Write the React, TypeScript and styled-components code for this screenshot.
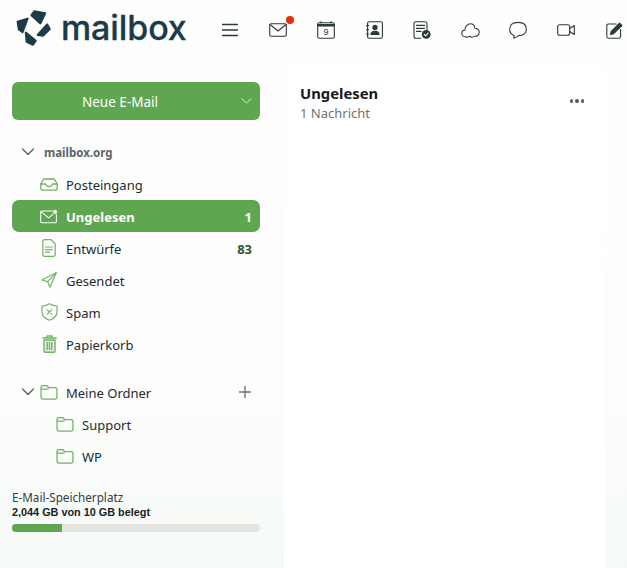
import React, { FC, ReactNode } from 'react';
import styled, { createGlobalStyle } from 'styled-components';

const GlobalStyle = createGlobalStyle`
  html, body {
    margin: 0;
    height: 100%;
    overflow: hidden;
  }
  body {
    font-family: "Noto Sans", "Open Sans", sans-serif;
    color: #1f2a2e;
  }
`;

const Page = styled.div`
  width: 627px;
  height: 568px;
  display: flex;
  flex-direction: column;
  overflow: hidden;
  background: linear-gradient(180deg, #fdfefd 0%, #fcfdfc 70%, #f5faf7 100%);
`;

const Header = styled.header`
  height: 60px;
  flex: none;
  display: flex;
  align-items: center;
  white-space: nowrap;
`;

const Logo = styled.div`
  width: 206px;
  flex: none;
  display: flex;
  align-items: center;
  gap: 9px;
  padding: 0 0 4px 16px;
  box-sizing: border-box;
`;

const LogoText = styled.span`
  font-family: "Inter", sans-serif;
  font-size: 34px;
  font-weight: 500;
  letter-spacing: -0.1px;
  color: #1b3b48;
  line-height: 38px;
  -webkit-text-stroke: 0.3px #1b3b48;
`;

const Toolbar = styled.nav`
  display: flex;
  align-items: center;
`;

const ToolButton = styled.div`
  position: relative;
  width: 48px;
  height: 48px;
  flex: none;
  display: flex;
  align-items: center;
  justify-content: center;
`;

const Badge = styled.span`
  position: absolute;
  top: 10px;
  right: 8px;
  width: 8px;
  height: 8px;
  border-radius: 50%;
  background: #e2300e;
`;

const Body = styled.div`
  flex: 1;
  display: flex;
  min-height: 0;
`;

const Sidebar = styled.aside`
  width: 284px;
  flex: none;
  box-sizing: border-box;
  padding: 22px 24px 0 12px;
  display: flex;
  flex-direction: column;
`;

const NewMail = styled.div`
  position: relative;
  height: 38px;
  box-sizing: border-box;
  padding: 2px 32px 0 0;
  border-radius: 6px;
  background: #5fa651;
  color: #fff;
  font-size: 13.5px;
  display: flex;
  align-items: center;
  justify-content: center;
`;

const NewMailCaret = styled.span`
  position: absolute;
  right: 7px;
  top: 12px;
  display: flex;
`;

const AccountRow = styled.div`
  height: 32px;
  margin-top: 16px;
  display: flex;
  align-items: center;
  padding-left: 8px;
  gap: 8px;
  font-size: 11.5px;
  font-weight: 700;
  color: #5b6468;
`;

const Row = styled.div<{ $active?: boolean; $indent?: number }>`
  height: 32px;
  display: flex;
  align-items: center;
  box-sizing: border-box;
  padding-left: ${p => p.$indent ?? 28}px;
  padding-right: 8px;
  border-radius: 7px;
  font-size: 13px;
  font-weight: ${p => (p.$active ? 700 : 400)};
  background: ${p => (p.$active ? '#5fa651' : 'transparent')};
  color: ${p => (p.$active ? '#fff' : '#222b30')};
`;

const RowIcon = styled.span`
  width: 18px;
  height: 20px;
  flex: none;
  margin-right: 8px;
  display: flex;
  align-items: center;
  justify-content: center;
`;

const RowLabel = styled.span`
  flex: 1;
  padding-top: 2px;
`;

const Count = styled.span<{ $active?: boolean }>`
  font-size: 13px;
  font-weight: 700;
  padding-top: 2px;
  color: ${p => (p.$active ? '#fff' : '#2f5a2a')};
`;

const FolderGroup = styled.div`
  margin-top: 16px;
`;

const FolderCaret = styled.span`
  width: 20px;
  margin-left: -20px;
  display: flex;
`;

const Storage = styled.div`
  margin-top: 17px;
`;

const StorageLabel = styled.div`
  font-size: 11.7px;
  line-height: 16px;
  color: #333b3f;
`;

const StorageValue = styled.div`
  font-family: "Liberation Sans", Arial, sans-serif;
  font-size: 10.85px;
  line-height: 15px;
  font-weight: 700;
  color: #1c2124;
`;

const StorageBar = styled.div`
  height: 8px;
  margin-top: 4px;
  border-radius: 4px;
  background: #e6e4df;
  overflow: hidden;
`;

const StorageFill = styled.div`
  height: 100%;
  background: #5fa651;
`;

const Main = styled.main`
  width: 321px;
  flex: none;
  margin-top: 6px;
  background: #fff;
  box-sizing: border-box;
  padding: 17px 16px;
  display: flex;
  align-items: flex-start;
  justify-content: space-between;
`;

const Title = styled.div`
  font-size: 14.8px;
  line-height: 20px;
  font-weight: 700;
  color: #17191b;
`;

const Subtitle = styled.div`
  font-size: 13px;
  line-height: 20px;
  color: #6e7478;
`;

const MoreButton = styled.div`
  display: flex;
  gap: 2px;
  margin: 16px 5px 0 0;
`;

const Dot = styled.span`
  width: 3.5px;
  height: 3.5px;
  border-radius: 50%;
  background: #5a5f62;
`;

const Icon: FC<{ size?: number; w?: number; h?: number; color?: string; sw?: number; children: ReactNode }> = ({
  size = 20,
  w,
  h,
  color = '#2d3a36',
  sw = 1.3,
  children,
}) => (
  <svg
    width={w ?? size}
    height={h ?? size}
    viewBox={`0 0 ${w ?? size} ${h ?? size}`}
    fill="none"
    stroke={color}
    strokeWidth={sw}
    strokeLinecap="round"
    strokeLinejoin="round"
  >
    {children}
  </svg>
);

const LogoMark = () => (
  <svg width="36" height="38" viewBox="0 0 36 38" fill="#1b3b48" stroke="#1b3b48" strokeWidth="2" strokeLinejoin="round">
    <path d="M18.4 2.2 L29.2 4.2 L24.4 14.4 L15.4 6.2 Z" />
    <path d="M1.6 12.6 L11.6 9.6 L6.6 23.2 L2.8 20.4 Z" />
    <path d="M31.2 15.4 L33.8 20 L27 26.8 L21.6 26 Z" />
    <path d="M9.8 23.6 L19.8 31.8 L17 35.8 L10.6 32.8 Z" />
  </svg>
);

const green = '#72b166';

const Chevron = () => (
  <Icon size={16} color="#4b5356" sw={1.1}>
    <path d="M2.5 5 L8 10.5 L13.5 5" />
  </Icon>
);

const FolderIcon = () => (
  <Icon w={18} h={16} color={green} sw={1.25}>
    <path d="M1 4 V13 Q1 15 3 15 H15 Q17 15 17 13 V5.5 Q17 3.5 15 3.5 H8.5 L6.8 1.5 H2.8 Q1 1.5 1 4 Z" />
    <path d="M1 5 H8" />
  </Icon>
);

const App: FC = () => (
  <>
    <GlobalStyle />
    <Page>
      <Header>
        <Logo>
          <LogoMark />
          <LogoText>mailbox</LogoText>
        </Logo>
        <Toolbar>
          <ToolButton>
            <Icon w={16} h={14} sw={1.4}>
              <path d="M0.5 1.5 H15.5 M0.5 7 H15.5 M0.5 12.5 H15.5" />
            </Icon>
          </ToolButton>
          <ToolButton>
            <Icon w={18} h={14} sw={1.1}>
              <rect x="0.7" y="0.7" width="16.6" height="12.6" rx="1.5" />
              <path d="M1 1.5 L9 8 L17 1.5" />
            </Icon>
            <Badge />
          </ToolButton>
          <ToolButton>
            <Icon w={18} h={18} sw={1.1}>
              <rect x="0.7" y="1.8" width="16.6" height="15.5" rx="1.5" />
              <path d="M0.7 4.2 H17.3" strokeWidth={2.4} />
              <path d="M4 0.6 V2 M14 0.6 V2" />
              <text x="9" y="14" textAnchor="middle" fontSize="9" fontFamily="Liberation Sans" fill="#2d3a36" stroke="none">
                9
              </text>
            </Icon>
          </ToolButton>
          <ToolButton>
            <Icon w={17} h={18} sw={1.1}>
              <rect x="1.6" y="0.7" width="14.8" height="16.6" rx="1.5" />
              <path d="M0.4 4.5 H2.6 M0.4 8.8 H2.6 M0.4 13 H2.6" />
              <circle cx="9" cy="6.4" r="2.6" fill="#2d3a36" stroke="none" />
              <path d="M4.4 14 Q4.4 9.8 9 9.8 Q13.6 9.8 13.6 14 Z" fill="#2d3a36" stroke="none" />
            </Icon>
          </ToolButton>
          <ToolButton>
            <Icon w={18} h={18} sw={1.1}>
              <path d="M8 17.3 H3 Q1 17.3 1 15.3 V2.7 Q1 0.7 3 0.7 H12 Q14 0.7 14 2.7 V9" />
              <path d="M3.5 4.4 H11.5 M3.5 7.4 H11.5 M3.5 10.4 H8" />
              <circle cx="13.2" cy="13.4" r="4.4" fill="#2d3a36" stroke="none" />
              <path d="M11.2 13.4 L12.7 14.9 L15.2 12" stroke="#fff" />
            </Icon>
          </ToolButton>
          <ToolButton>
            <Icon w={19} h={15} sw={1.05}>
              <path d="M4.5 13.8 C2 14 0.7 12 0.8 10 C0.9 8 2.5 7 4 7 C3.8 3.5 6.5 0.8 9.5 0.8 C12 0.8 13.5 2.8 13.8 5.2 C16.5 5.2 18.4 7 18.2 9.5 C18 12 16 13.8 13.5 13.2 C12 14.6 9.5 14.4 8.5 13.2 C7.3 14.4 5.6 14.4 4.5 13.8 Z" />
            </Icon>
          </ToolButton>
          <ToolButton>
            <Icon w={18} h={18} sw={1.1}>
              <path d="M5 14.5 Q0.7 12.8 0.7 8.6 Q0.7 1.4 9 1.4 Q17.3 1.4 17.3 8.2 Q17.3 14.4 9.5 14.6 Q7.5 16.4 4.6 17.2 Q5.4 16 5 14.5 Z" />
            </Icon>
          </ToolButton>
          <ToolButton>
            <Icon w={18} h={12} sw={1.1}>
              <rect x="0.7" y="0.7" width="12" height="10.6" rx="2" />
              <path d="M12.7 4.5 L17.3 1.5 V10.5 L12.7 7.5" />
            </Icon>
          </ToolButton>
          <ToolButton>
            <Icon w={17} h={17} sw={1.1}>
              <path d="M10 2 H2.4 Q0.8 2 0.8 3.6 V14.6 Q0.8 16.2 2.4 16.2 H13 Q14.6 16.2 14.6 14.6 V7.5" />
              <path d="M4.5 12.4 L5.3 9.3 L13.5 1.1 L15.9 3.5 L7.7 11.6 Z" fill="#2d3a36" />
            </Icon>
          </ToolButton>
        </Toolbar>
      </Header>
      <Body>
        <Sidebar>
          <NewMail>
            Neue E-Mail
            <NewMailCaret>
              <Icon w={14} h={14} color="#d9ecd5" sw={1}>
                <path d="M3 5 L7.5 9 L12 5" />
              </Icon>
            </NewMailCaret>
          </NewMail>
          <AccountRow>
            <Chevron />
            mailbox.org
          </AccountRow>
          <Row>
            <RowIcon>
              <Icon w={18} h={13} color={green} sw={1.3}>
                <path d="M4.5 1 H13.5 Q14.5 1 15 2 L17.2 6 V10 Q17.2 12.2 15 12.2 H3 Q0.8 12.2 0.8 10 V6 L3 2 Q3.5 1 4.5 1 Z" />
                <path d="M0.8 6 H5.5 Q6 8.6 9 8.6 Q12 8.6 12.5 6 H17.2" />
              </Icon>
            </RowIcon>
            <RowLabel>Posteingang</RowLabel>
          </Row>
          <Row $active>
            <RowIcon>
              <Icon w={19} h={15} color="#fff" sw={1.1}>
                <rect x="0.7" y="1.6" width="16.6" height="12.6" rx="1.5" />
                <path d="M1 2.4 L9 9 L17 2.4" />
                <circle cx="16" cy="2.6" r="2.5" fill="#fff" stroke="#5fa651" strokeWidth={0.8} />
              </Icon>
            </RowIcon>
            <RowLabel>Ungelesen</RowLabel>
            <Count $active>1</Count>
          </Row>
          <Row>
            <RowIcon>
              <Icon w={14} h={18} color={green} sw={1.2}>
                <path d="M9 0.7 H2.5 Q0.8 0.7 0.8 2.4 V15.6 Q0.8 17.3 2.5 17.3 H11.5 Q13.2 17.3 13.2 15.6 V5 Z" />
                <path d="M3.6 8 H10.4 M3.6 10.6 H10.4 M3.6 13.2 H7.5" />
              </Icon>
            </RowIcon>
            <RowLabel>Entwürfe</RowLabel>
            <Count>83</Count>
          </Row>
          <Row>
            <RowIcon>
              <Icon w={16} h={16} color={green} sw={1.2}>
                <path d="M15.2 0.8 L0.8 8 L6.6 9.6 L9 15.2 Z" />
                <path d="M6.6 9.6 L15.2 0.8" />
              </Icon>
            </RowIcon>
            <RowLabel>Gesendet</RowLabel>
          </Row>
          <Row>
            <RowIcon>
              <Icon w={17} h={18} color={green} sw={1.2}>
                <path d="M8.5 0.8 Q12 3 16 3 V9 Q16 14.5 8.5 17.2 Q1 14.5 1 9 V3 Q5 3 8.5 0.8 Z" />
                <path d="M6.3 6.8 L10.7 11.2 M10.7 6.8 L6.3 11.2" />
              </Icon>
            </RowIcon>
            <RowLabel>Spam</RowLabel>
          </Row>
          <Row>
            <RowIcon>
              <Icon w={15} h={18} color={green} sw={1.4}>
                <path d="M0.8 3 H14.2 M5 2.8 V1 H10 V2.8" />
                <path d="M2 5 V15.8 Q2 17.3 3.5 17.3 H11.5 Q13 17.3 13 15.8 V5 Z" fill="#e3f0e0" />
                <path d="M5.2 7.5 V14.5 M7.5 7.5 V14.5 M9.8 7.5 V14.5" />
              </Icon>
            </RowIcon>
            <RowLabel>Papierkorb</RowLabel>
          </Row>
          <FolderGroup>
            <Row>
              <FolderCaret>
                <Chevron />
              </FolderCaret>
              <RowIcon>
                <FolderIcon />
              </RowIcon>
              <RowLabel>Meine Ordner</RowLabel>
              <Icon w={14} h={14} color="#6c6f6e" sw={1.3}>
                <path d="M7 1.5 V12.5 M1.5 7 H12.5" />
              </Icon>
            </Row>
            <Row $indent={44}>
              <RowIcon>
                <FolderIcon />
              </RowIcon>
              <RowLabel>Support</RowLabel>
            </Row>
            <Row $indent={44}>
              <RowIcon>
                <FolderIcon />
              </RowIcon>
              <RowLabel>WP</RowLabel>
            </Row>
          </FolderGroup>
          <Storage>
            <StorageLabel>E-Mail-Speicherplatz</StorageLabel>
            <StorageValue>2,044 GB von 10 GB belegt</StorageValue>
            <StorageBar>
              <StorageFill style={{ width: '20%' }} />
            </StorageBar>
          </Storage>
        </Sidebar>
        <Main>
          <div>
            <Title>Ungelesen</Title>
            <Subtitle>1 Nachricht</Subtitle>
          </div>
          <MoreButton>
            <Dot />
            <Dot />
            <Dot />
          </MoreButton>
        </Main>
      </Body>
    </Page>
  </>
);

export default App;
